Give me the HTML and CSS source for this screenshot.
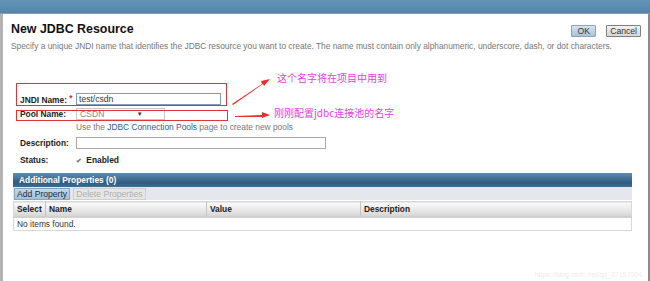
FILE: index.html
```html
<!DOCTYPE html>
<html lang="zh">
<head>
    <meta charset="UTF-8">
    <title>New JDBC Resource</title>
    <link rel="stylesheet" href="styles.css">
</head>
<body>

<div class="topbar"></div>

<div class="frame">
    <div class="head">
        <h1>New JDBC Resource</h1>
        <div class="actions">
            <button class="btn btn-primary">OK</button>
            <button class="btn">Cancel</button>
        </div>
    </div>
    <p class="help">Specify a unique JNDI name that identifies the JDBC resource you want to create. The name must contain only alphanumeric, underscore, dash, or dot characters.</p>

    <div class="form">
        <div class="row row-jndi">
            <label>JNDI Name: <span class="req">*</span></label>
            <input class="field field-jndi" type="text" value="test/csdn">
        </div>
        <div class="row row-pool">
            <label>Pool Name:</label>
            <span class="select">CSDN <span class="caret">&#9660;</span></span>
        </div>
        <div class="row row-note">
            <label></label>
            <span class="note">Use the <a href="#">JDBC Connection Pools</a> page to create new pools</span>
        </div>
        <div class="row row-desc">
            <label>Description:</label>
            <input class="field field-desc" type="text">
        </div>
        <div class="row row-status">
            <label>Status:</label>
            <span class="check"><span class="box">&#10004;</span> Enabled</span>
        </div>
    </div>

    <div class="props">
        <div class="props-title">Additional Properties (0)</div>
        <div class="props-bar">
            <button class="pbtn">Add Property</button>
            <button class="pbtn pbtn-off">Delete Properties</button>
        </div>
        <table class="grid">
            <tr>
                <th class="c-select">Select</th>
                <th class="c-name">Name</th>
                <th class="c-value">Value</th>
                <th>Description</th>
            </tr>
            <tr>
                <td colspan="4">No items found.</td>
            </tr>
        </table>
    </div>
</div>

<!-- annotations drawn over the screenshot -->
<div class="mark mark-1"></div>
<div class="mark mark-2"></div>
<svg class="arrows" width="650" height="281" viewBox="0 0 650 281">
    <polygon points="232,104 262,84 261,81 270,79 264,86 263,84 233,105" fill="#e8302c"/>
    <polygon points="235,116 262,115 262,112 270,115 262,118 262,117 235,117" fill="#e8302c"/>
</svg>
<div class="note-cn note-cn-1">这个名字将在项目中用到</div>
<div class="note-cn note-cn-2">刚刚配置jdbc连接池的名字</div>
<div class="watermark">https://blog.csdn.net/qq_37157004</div>

</body>
</html>
```

FILE: styles.css
```css
html, body {
    margin: 0;
    height: 100%;
}
body {
    font-family: "Liberation Sans", Arial, sans-serif;
    font-size: 8.4px;
    color: #333;
    background: #fff;
    position: relative;
    overflow: hidden;
}
.topbar {
    height: 13px;
    background: linear-gradient(#6494b8, #5585aa);
    border-bottom: 1px solid #8a9aa8;
}
.frame {
    border-left: 3px solid #b4b4b4;
    border-right: 2px solid #8c8c8c;
    height: 267px;
}
.head {
    display: flex;
    justify-content: space-between;
    align-items: flex-start;
    padding: 8px 7px 0 8px;
}
h1 {
    margin: 0;
    font-size: 12.4px;
    line-height: 15px;
    color: #111;
}
.actions {
    display: flex;
    gap: 10px;
    padding-top: 3px;
}
.btn {
    font-family: inherit;
    font-size: 8.6px;
    height: 12px;
    line-height: 10px;
    padding: 0 3px;
    border: 1px solid #7f7f7f;
    border-radius: 1px;
    background: linear-gradient(#f2f2f2, #d6d6d6);
    color: #333;
}
.btn-primary {
    width: 25px;
    background: linear-gradient(#d4e3f0, #a9c3da);
    border-color: #8da4b8;
}
.help {
    margin: 3px 0 0 8px;
    font-size: 8.35px;
    line-height: 12px;
    color: #777;
    white-space: nowrap;
}

.form {
    margin: 40px 0 0 17px;
}
.row {
    display: flex;
    align-items: center;
}
.row label {
    width: 56px;
    flex: none;
    white-space: nowrap;
    font-weight: bold;
    color: #222;
}
.req {
    color: #d03030;
    vertical-align: 2px;
}
.row-jndi { height: 14px; }
.row-pool { height: 14px; margin-top: 1px; }
.row-note { height: 12px; }
.row-desc { height: 16px; margin-top: 2px; }
.row-status { height: 15px; margin-top: 1px; }
.field {
    box-sizing: border-box;
    height: 12px;
    margin: 0;
    padding: 0 2px;
    font-family: inherit;
    font-size: 8.6px;
    color: #333;
    border: 1px solid #a8a8a8;
}
.field-jndi {
    width: 145px;
    border-color: #7b9ec4;
}
.field-desc {
    width: 250px;
}
.select {
    box-sizing: border-box;
    width: 89px;
    height: 12px;
    line-height: 10px;
    padding-left: 3px;
    border: 1px solid #c8c8c8;
    color: #888;
    font-size: 8.6px;
}
.caret {
    font-size: 6px;
    color: #333;
    margin-left: 30px;
    vertical-align: 1px;
}
.note {
    color: #777;
}
.note a {
    color: #2a5d9a;
    text-decoration: none;
}
.check {
    font-weight: bold;
    color: #222;
}
.box {
    display: inline-block;
    font-size: 7px;
    color: #777;
    margin-right: 2px;
}

.props {
    margin: 6px 0 0 10px;
    width: 619px;
}
.props-title {
    height: 14px;
    line-height: 14px;
    padding-left: 6px;
    background: linear-gradient(#5f8cb0, #2f5c80 70%, #3d6e96);
    color: #fff;
    font-weight: bold;
}
.props-bar {
    display: flex;
    gap: 3px;
    height: 12px;
    padding: 1px 1px 0;
    background: #e4e7eb;
}
.pbtn {
    height: 12px;
    line-height: 10px;
    padding: 0 2px;
    font-family: inherit;
    font-size: 8.6px;
    color: #1c2c3c;
    background: linear-gradient(#c4d8e8, #a4c0d8);
    border: 1px solid #8aa4bc;
}
.pbtn-off {
    color: #b0b0b0;
    background: #e6e6e6;
    border-color: #cfcfcf;
}
.grid {
    width: 100%;
    table-layout: fixed;
    border-collapse: collapse;
    border: 1px solid #d8d8d8;
    margin-top: 1px;
}
.grid th {
    height: 14px;
    padding: 0 3px;
    text-align: left;
    font-weight: bold;
    color: #222;
    background: linear-gradient(#fafafa, #e6e6e6 60%, #d4d4d4);
    border-left: 1px solid #c4c4c4;
    border-bottom: 2px solid #d0d0d0;
}
.grid th:first-child {
    border-left: none;
}
.c-select { width: 25px; }
.c-name { width: 154px; }
.c-value { width: 147px; }
.grid td {
    height: 12px;
    padding: 0 3px;
    color: #333;
    border-top: 1px solid #e4e4e4;
}

.mark {
    position: absolute;
    border: 1.5px solid #e4323a;
}
.mark-1 {
    left: 16px;
    top: 83px;
    width: 209px;
    height: 21px;
}
.mark-2 {
    left: 16px;
    top: 110px;
    width: 210px;
    height: 9px;
}
.arrows {
    position: absolute;
    left: 0;
    top: 0;
}
.note-cn {
    position: absolute;
    font-family: "Noto Sans CJK SC", sans-serif;
    font-size: 10px;
    line-height: 12px;
    color: #e23ee2;
}
.note-cn-1 {
    left: 277px;
    top: 72px;
}
.note-cn-2 {
    left: 274px;
    top: 107px;
}
.watermark {
    position: absolute;
    right: 8px;
    bottom: 3px;
    font-size: 7px;
    color: #ececec;
}
```
